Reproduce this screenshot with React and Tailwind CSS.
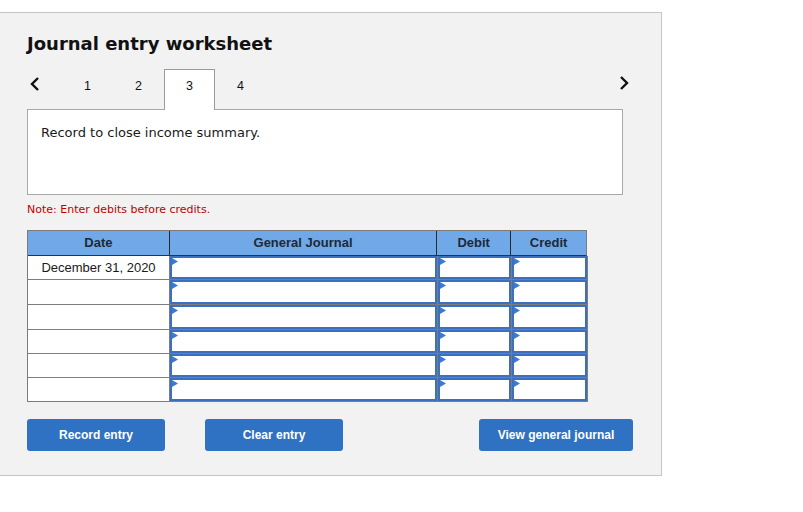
import React from "react";

const cols = ["w-[142px]", "w-[268px]", "w-[74px]", "w-[76px]"];
const rowHeights = ["h-[24px]", "h-[25px]", "h-[25px]", "h-[24px]", "h-[24px]", "h-[24px]"];

function InputCell({ width }) {
  return (
    <div className={`${width} h-full border-r border-b border-[#7d7d7d] shrink-0`}>
      <div className="relative h-full w-full border-2 border-[#3a70bf] bg-white">
        <svg className="absolute left-0 top-0" width="6" height="7" viewBox="0 0 6 7">
          <polygon points="0,0 6,3.5 0,7" fill="#3b7ad2" />
        </svg>
      </div>
    </div>
  );
}

function Chevron({ dir }) {
  return (
    <svg width="12" height="16" viewBox="0 0 12 16">
      {dir === "left" ? (
        <polyline points="9,2 3,8 9,14" fill="none" stroke="#111" strokeWidth="2.4" />
      ) : (
        <polyline points="3,2 9,8 3,14" fill="none" stroke="#111" strokeWidth="2.4" />
      )}
    </svg>
  );
}

export default function App() {
  const tabs = ["1", "2", "3", "4"];
  return (
    <div className="w-[803px] h-[512px] bg-white overflow-hidden">
      <div className="mt-[12px] w-[662px] h-[464px] border-t border-r border-b border-[#c6c6c6] bg-[#f2f2f2] pl-[27px] box-border">
        <div
          className="pt-[20px] h-[41px] text-[18px] leading-[22px] font-bold text-[#111]"
          style={{ fontFamily: '"DejaVu Sans", Verdana, sans-serif' }}
        >
          Journal entry worksheet
        </div>

        <div className="mt-[15px] h-[40px] flex items-start" style={{ fontFamily: '"Liberation Sans", Arial, sans-serif' }}>
          <div className="w-[35px] h-[40px] flex items-start pt-[7px] pl-[2px]">
            <Chevron dir="left" />
          </div>
          {tabs.map((t) => (
            <div
              key={t}
              className={
                t === "3"
                  ? "relative z-10 w-[51px] h-[41px] bg-white border-t border-l border-r border-[#9a9a9a] pt-[9px] text-center text-[12.5px] leading-[14px] text-[#111]"
                  : "w-[51px] h-[40px] border-t border-l border-r border-transparent pt-[9px] text-center text-[12.5px] leading-[14px] text-[#111]"
              }
            >
              {t}
            </div>
          ))}
          <div className="ml-auto mr-[31px] h-[40px] pt-[6px]">
            <Chevron dir="right" />
          </div>
        </div>

        <div
          className="w-[596px] h-[86px] border border-[#a9a9a9] bg-white pl-[13px] pt-[15px] text-[13px] leading-[16px] text-[#1a1a1a]"
          style={{ fontFamily: '"DejaVu Sans", Verdana, sans-serif' }}
        >
          Record to close income summary.
        </div>

        <div
          className="mt-[8px] h-[14px] text-[11px] leading-[14px] text-[#c00000]"
          style={{ fontFamily: '"DejaVu Sans", Verdana, sans-serif' }}
        >
          Note: Enter debits before credits.
        </div>

        <div
          className="mt-[13px] w-[560px] border-l border-t border-[#7b7b7b] text-[13px]"
          style={{ fontFamily: '"Liberation Sans", Arial, sans-serif' }}
        >
          <div className="flex h-[25px] bg-[#70a8e8]">
            {["Date", "General Journal", "Debit", "Credit"].map((h, i) => (
              <div
                key={h}
                className={`${cols[i]} h-full flex items-center justify-center font-bold text-[#1e2a36] border-b border-b-[#333] border-r ${
                  i === 3 ? "border-r-[#7b7b7b]" : "border-r-[#2a2a2a]"
                }`}
              >
                {h}
              </div>
            ))}
          </div>
          {rowHeights.map((rh, r) => (
            <div key={r} className={`flex ${rh}`}>
              <div className={`${cols[0]} h-full shrink-0 border-r border-b border-[#7d7d7d] bg-white flex items-center justify-center text-[#1a1a1a]`}>
                {r === 0 ? "December 31, 2020" : ""}
              </div>
              <InputCell width={cols[1]} />
              <InputCell width={cols[2]} />
              <InputCell width={cols[3]} />
            </div>
          ))}
        </div>

        <div
          className="mt-[17px] flex text-[12px] font-bold text-white"
          style={{ fontFamily: '"Liberation Sans", Arial, sans-serif' }}
        >
          <div className="w-[138px] h-[32px] rounded-[3px] bg-[#2f72c3] flex items-center justify-center">Record entry</div>
          <div className="ml-[40px] w-[138px] h-[32px] rounded-[3px] bg-[#2f72c3] flex items-center justify-center">Clear entry</div>
          <div className="ml-[136px] w-[154px] h-[32px] rounded-[3px] bg-[#2f72c3] flex items-center justify-center">View general journal</div>
        </div>
      </div>
    </div>
  );
}
